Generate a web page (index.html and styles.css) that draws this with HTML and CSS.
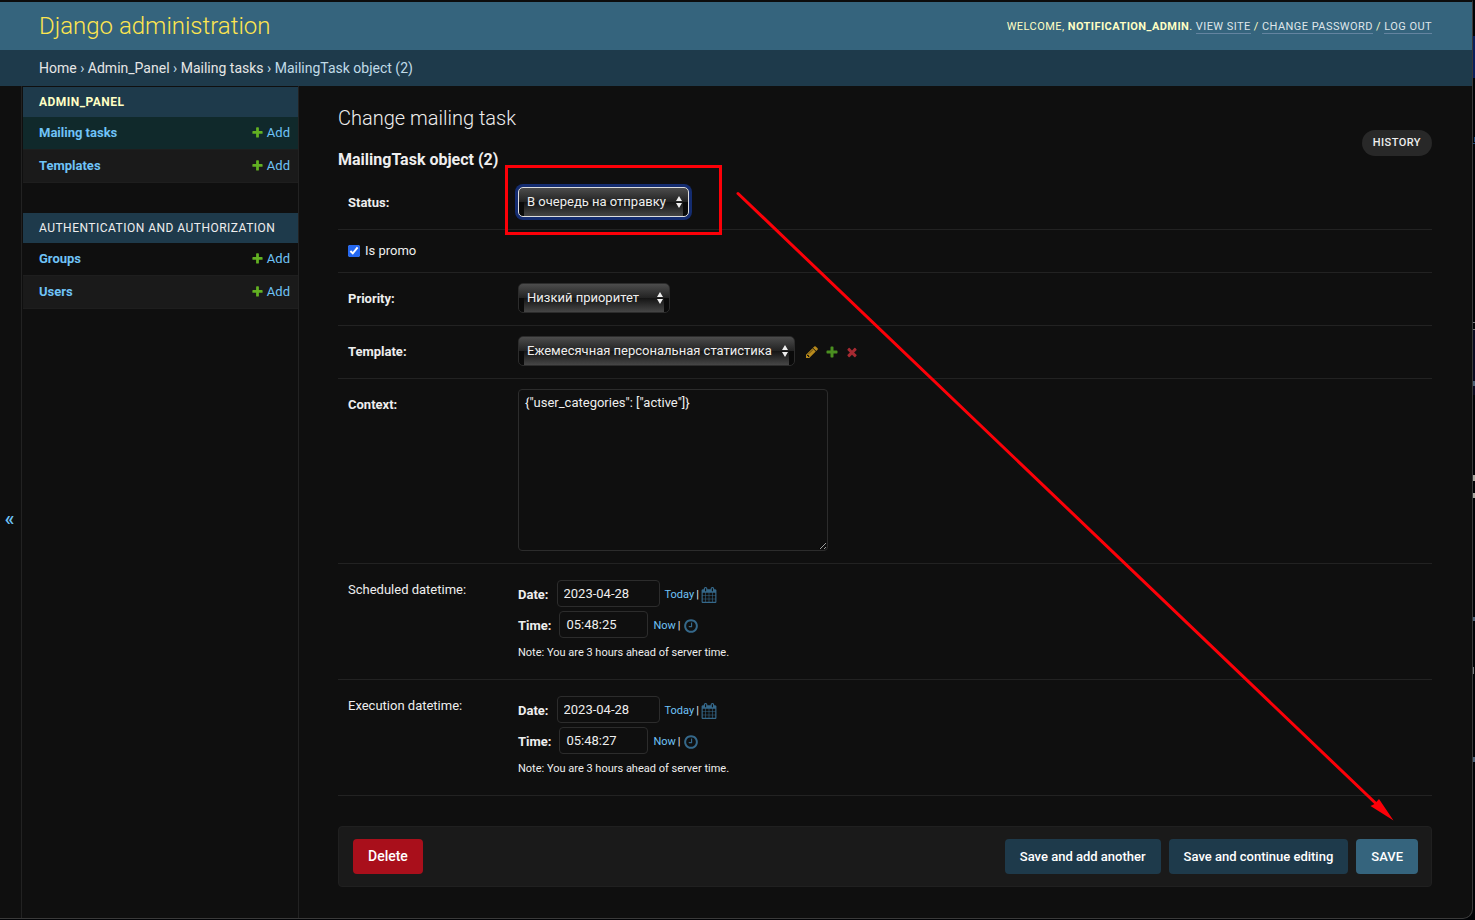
FILE: index.html
```html
<!DOCTYPE html>
<html lang="en">
<head>
<meta charset="utf-8">
<title>MailingTask object (2) | Change mailing task | Django administration</title>
<link rel="stylesheet" href="styles.css">
</head>
<body>
<svg class="symbols" aria-hidden="true">
  <symbol id="plus" viewBox="0 0 1792 1792"><path d="M1600 796v192q0 40-28 68t-68 28h-416v416q0 40-28 68t-68 28h-192q-40 0-68-28t-28-68v-416h-416q-40 0-68-28t-28-68v-192q0-40 28-68t68-28h416v-416q0-40 28-68t68-28h192q40 0 68 28t28 68v416h416q40 0 68 28t28 68z"/></symbol>
  <symbol id="pencil" viewBox="0 0 1792 1792"><path d="M491 1536l91-91-235-235-91 91v107h128v128h107zm523-928q0-22-22-22-10 0-17 7l-542 542q-7 7-7 17 0 22 22 22 10 0 17-7l542-542q7-7 7-17zm-54-192l416 416-832 832h-416v-416zm683 96q0 53-37 90l-166 166-416-416 166-165q36-38 90-38 53 0 91 38l235 234q37 39 37 91z"/></symbol>
  <symbol id="cross" viewBox="0 0 1792 1792"><path d="M1490 1322q0 40-28 68l-136 136q-28 28-68 28t-68-28l-294-294-294 294q-28 28-68 28t-68-28l-136-136q-28-28-28-68t28-68l294-294-294-294q-28-28-28-68t28-68l136-136q28-28 68-28t68 28l294 294 294-294q28-28 68-28t68 28l136 136q28 28 28 68t-28 68l-294 294 294 294q28 28 28 68z"/></symbol>
  <symbol id="calendar" viewBox="0 0 1792 1792"><path d="M192 1664h288v-288h-288v288zm352 0h320v-288h-320v288zm-352-352h288v-320h-288v320zm352 0h320v-320h-320v320zm-352-384h288v-288h-288v288zm736 736h320v-288h-320v288zm-384-736h320v-288h-320v288zm768 736h288v-288h-288v288zm-384-352h320v-320h-320v320zm-352-864v-288q0-13-9.500-22.500t-22.500-9.500h-64q-13 0-22.500 9.500t-9.500 22.500v288q0 13 9.500 22.500t22.500 9.500h64q13 0 22.500-9.500t9.500-22.500zm736 864h288v-320h-288v320zm-384-384h320v-288h-320v288zm384 0h288v-288h-288v288zm32-480v-288q0-13-9.500-22.500t-22.500-9.500h-64q-13 0-22.500 9.500t-9.500 22.500v288q0 13 9.500 22.500t22.500 9.500h64q13 0 22.500-9.500t9.500-22.500zm384-64v1280q0 52-38 90t-90 38h-1408q-52 0-90-38t-38-90v-1280q0-52 38-90t90-38h128v-96q0-66 47-113t113-47h64q66 0 113 47t47 113v96h384v-96q0-66 47-113t113-47h64q66 0 113 47t47 113v96h128q52 0 90 38t38 90z"/></symbol>
  <symbol id="clock" viewBox="0 0 1792 1792"><path d="M1024 544v448q0 14-9 23t-23 9h-320q-14 0-23-9t-9-23v-64q0-14 9-23t23-9h224v-352q0-14 9-23t23-9h64q14 0 23 9t9 23zm416 352q0-148-73-273t-198-198-273-73-273 73-198 198-73 273 73 273 198 198 273 73 273-73 198-198 73-273zm224 0q0 209-103 385.500t-279.500 279.500-385.500 103-385.500-103-279.500-279.500-103-385.500 103-385.500 279.500-279.500 385.500-103 385.500 103 279.500 279.500 103 385.500z"/></symbol>
  <symbol id="updown" viewBox="0 0 6 12"><path d="M3 0l3 5H0zM3 12L0 7h6z"/></symbol>
</svg>

<div class="window">
  <header class="header">
    <h1 class="brand"><a href="#">Django administration</a></h1>
    <div class="user-tools">Welcome, <strong>notification_admin</strong>. <a href="#">View site</a> / <a href="#">Change password</a> / <a href="#">Log out</a></div>
  </header>
  <nav class="breadcrumbs" aria-label="Breadcrumbs"><a href="#">Home</a> › <a href="#">Admin_Panel</a> › <a href="#">Mailing tasks</a> › MailingTask object (2)</nav>

  <div class="main">
    <button class="nav-toggle" type="button" aria-label="Toggle navigation">«</button>
    <nav class="sidebar" aria-label="Applications">
      <table class="module">
        <caption class="current-app"><a href="#">Admin_Panel</a></caption>
        <tr class="current-model"><th scope="row"><a href="#">Mailing tasks</a></th><td><a class="add" href="#"><svg><use href="#plus"/></svg>Add</a></td></tr>
        <tr><th scope="row"><a href="#">Templates</a></th><td><a class="add" href="#"><svg><use href="#plus"/></svg>Add</a></td></tr>
      </table>
      <table class="module">
        <caption><a href="#">Authentication and Authorization</a></caption>
        <tr><th scope="row"><a href="#">Groups</a></th><td><a class="add" href="#"><svg><use href="#plus"/></svg>Add</a></td></tr>
        <tr><th scope="row"><a href="#">Users</a></th><td><a class="add" href="#"><svg><use href="#plus"/></svg>Add</a></td></tr>
      </table>
    </nav>

    <main class="content">
      <div class="title-row">
        <div>
          <h1 class="title">Change mailing task</h1>
          <h2 class="subtitle">MailingTask object (2)</h2>
        </div>
        <a class="history" href="#">History</a>
      </div>

      <form>
        <div class="form-row">
          <label class="name" for="status">Status:</label>
          <span class="select focused"><select id="status"><option>В очередь на отправку</option></select><svg><use href="#updown"/></svg></span>
        </div>
        <div class="form-row check-row">
          <input id="promo" type="checkbox" checked><label for="promo">Is promo</label>
        </div>
        <div class="form-row">
          <label class="name" for="priority">Priority:</label>
          <span class="select"><select id="priority"><option>Низкий приоритет</option></select><svg><use href="#updown"/></svg></span>
        </div>
        <div class="form-row">
          <label class="name" for="template">Template:</label>
          <span class="select"><select id="template"><option>Ежемесячная персональная статистика</option></select><svg><use href="#updown"/></svg></span>
          <span class="related">
            <a class="change" href="#" aria-label="Change template"><svg><use href="#pencil"/></svg></a>
            <a class="plus" href="#" aria-label="Add template"><svg><use href="#plus"/></svg></a>
            <a class="delete" href="#" aria-label="Delete template"><svg><use href="#cross"/></svg></a>
          </span>
        </div>
        <div class="form-row">
          <label class="name" for="context">Context:</label>
          <textarea id="context">{"user_categories": ["active"]}</textarea>
        </div>
        <div class="form-row datetime-row">
          <span class="name optional">Scheduled datetime:</span>
          <div class="datetime">
            <div class="line"><label for="sd">Date:</label><input class="date" id="sd" type="text" value="2023-04-28"><span class="shortcuts"><a href="#">Today</a> | <a class="pick" href="#" aria-label="Choose a date"><svg><use href="#calendar"/></svg></a></span></div>
            <div class="line"><label for="st">Time:</label><input class="time" id="st" type="text" value="05:48:25"><span class="shortcuts"><a href="#">Now</a> | <a class="pick" href="#" aria-label="Choose a time"><svg><use href="#clock"/></svg></a></span></div>
            <p class="note">Note: You are 3 hours ahead of server time.</p>
          </div>
        </div>
        <div class="form-row datetime-row">
          <span class="name optional">Execution datetime:</span>
          <div class="datetime">
            <div class="line"><label for="ed">Date:</label><input class="date" id="ed" type="text" value="2023-04-28"><span class="shortcuts"><a href="#">Today</a> | <a class="pick" href="#" aria-label="Choose a date"><svg><use href="#calendar"/></svg></a></span></div>
            <div class="line"><label for="et">Time:</label><input class="time" id="et" type="text" value="05:48:27"><span class="shortcuts"><a href="#">Now</a> | <a class="pick" href="#" aria-label="Choose a time"><svg><use href="#clock"/></svg></a></span></div>
            <p class="note">Note: You are 3 hours ahead of server time.</p>
          </div>
        </div>
        <div class="submit-row">
          <a class="button delete-button" href="#">Delete</a>
          <button class="button" type="button">Save and add another</button>
          <button class="button" type="button">Save and continue editing</button>
          <button class="button save" type="button">SAVE</button>
        </div>
      </form>
    </main>
  </div>
</div>

<svg class="backdrop-edge" viewBox="0 0 2 920" aria-hidden="true">
  <path fill="#0a1f5c" d="M0 36h2v42H0z"/>
  <path fill="#1d4a78" d="M0 143h2v1H0zM1 137h1v5H1z"/>
  <path fill="#0a0a20" d="M0 330h2v65H0z"/>
  <path fill="#77797c" d="M0 322h2v1H0zM0 329h2v1H0zM0 667h1v7H0z"/>
  <path fill="#4d6378" d="M0 381h2v5H0zM0 617h2v4H0zM0 757h2v5H0z"/>
  <path fill="#a8a8a0" d="M0 475h2v6H0zM0 493h2v5H0z"/>
</svg>
<svg class="annotation" width="1475" height="920" aria-hidden="true">
  <rect x="506.500" y="166.500" width="214" height="67" fill="none" stroke="#fc0008" stroke-width="3"/>
  <path d="M738 193.500L1378 805.500" fill="none" stroke="#fc0008" stroke-width="3" stroke-linecap="round"/>
  <path d="M1393.500 820.500l-23-14.500 4-2 4.500-5z" fill="#fc0008"/>
</svg>
</body>
</html>
```
FILE: styles.css
```css
* { box-sizing: border-box; }

body {
  margin: 0;
  position: relative;
  background: #010306;
  color: #eee;
  font: 13px/20px Roboto, sans-serif;
}

a { color: #6fc3f7; text-decoration: none; }
svg { display: block; fill: currentColor; }
.symbols { display: none; }
input, select, textarea, button { font: inherit; color: inherit; margin: 0; }

.window {
  display: flex;
  flex-direction: column;
  min-height: calc(100vh - 1px);
  margin-right: 2px;
  border-top: 2px solid #0c0c0c;
  border-right: 1px solid #3a3a3a;
  border-bottom: 1px solid #3a3a3a;
  border-bottom-right-radius: 10px;
  background: #0f0f0f;
}

.header {
  display: flex;
  align-items: center;
  justify-content: space-between;
  height: 48px;
  padding: 0 40px 0 39px;
  background: #35647d;
  color: #ffffc4;
}
.brand { margin: 0; font-size: 24px; font-weight: 300; line-height: 28px; }
.brand a { color: #ffe64f; }
.user-tools { padding-top: 2px; font-size: 11px; text-transform: uppercase; letter-spacing: 0.04em; }
.user-tools strong { font-weight: 700; }
.user-tools a { color: #dfe6ea; border-bottom: 1px solid #6484a0; }

.breadcrumbs {
  padding: 8px 39px;
  background: #1e3a4b;
  color: #c0dbe8;
  font-size: 14px;
}
.breadcrumbs a { color: #e6e6e6; }

.main { display: flex; flex: 1; }
.nav-toggle {
  width: 22px;
  padding: 32px 2px 0 0;
  border: 0;
  border-right: 1px solid #222;
  background: none;
  color: #6fc3f7;
  font-size: 20px;
  font-weight: 500;
}
.sidebar {
  width: 277px;
  flex: none;
  padding: 1px 0 0 1px;
  border-right: 1px solid #222;
}
.module { width: 100%; margin-bottom: 30px; border-collapse: collapse; }
.module caption {
  padding: 5px 16px;
  background: #1e3a4b;
  text-align: left;
  text-transform: uppercase;
  font-size: 12px;
  letter-spacing: 0.04em;
}
.module caption a { color: #eee; }
.module .current-app { font-weight: 700; }
.module .current-app a { color: #ffffc4; }
.module th, .module td { padding: 6px 8px 6px 16px; border-bottom: 1px solid #1e1e1e; text-align: left; }
.module tr:nth-child(even) { background: #1a1a1a; }
.module .current-model { background: #10292b; }
.module td { width: 80px; }
.add { display: flex; align-items: center; justify-content: flex-end; gap: 3px; }
.add svg { width: 13px; height: 13px; margin-bottom: 2px; color: #62b022; }

.content { flex: 1; min-width: 0; padding: 20px 40px 31px 39px; }
.title-row { display: flex; justify-content: space-between; align-items: flex-start; }
.title { margin: 0 0 20px; font-size: 20px; font-weight: 300; line-height: 24px; color: #eee; }
.subtitle { margin: 0 0 7px; font-size: 16px; line-height: 20px; }
.history {
  margin-top: 24px;
  padding: 3px 11px;
  border-radius: 15px;
  background: #282828;
  color: #eee;
  font-size: 11px;
  font-weight: 500;
  text-transform: uppercase;
  letter-spacing: 0.04em;
}

.form-row {
  display: flex;
  align-items: flex-start;
  padding: 10px 10px 12px;
  border-bottom: 1px solid #222;
}
.name { width: 170px; padding-top: 6px; font-weight: 700; }
.optional { font-weight: 400; }

.check-row { align-items: center; gap: 5px; padding: 11px 10px; }
.check-row input { width: 12px; height: 12px; accent-color: #2568f0; }

.select { position: relative; display: block; }
.select select {
  display: block;
  appearance: none;
  height: 30px;
  padding: 0 22px 0 8px;
  border: 1px solid #2c2c2c;
  border-radius: 5px;
  outline: 0;
  background:
    linear-gradient(#141414, #464646) center bottom / calc(100% - 10px) 14px no-repeat,
    linear-gradient(#4c4c4c, #222) top / 100% 14px no-repeat,
    #0a0a0a;
}
.select #priority { min-width: 152px; }
.select svg { position: absolute; right: 7px; top: 9px; width: 6px; height: 12px; }
.focused select { border-color: #ddd; box-shadow: 0 0 0 3px #142c70; }

.related { display: flex; align-items: center; gap: 6px; padding: 9px 0 0 10px; }
.related svg { width: 14px; height: 14px; }
.change { color: #b88a1c; }
.plus { color: #4a8f20; }
.delete { color: #a62a32; }

textarea {
  display: block;
  width: 310px;
  height: 162px;
  padding: 3px 6px;
  border: 1px solid #2c2c2c;
  border-radius: 4px;
  background: #0f0f0f;
}

.datetime-row { padding: 16px; padding-left: 10px; }
.datetime-row .name { padding-top: 0; }
.datetime { display: grid; gap: 4px; }
.line { display: flex; align-items: center; }
.line label { margin-right: 8px; padding-top: 2px; font-weight: 700; }
.line input {
  height: 27px;
  padding: 0 6px;
  border: 1px solid #2c2c2c;
  border-radius: 4px;
  background: #0f0f0f;
}
.line .date { width: 103px; }
.line .time { width: 89px; }
.shortcuts { display: flex; align-items: center; gap: 2px; padding: 3px 0 0 5px; font-size: 11px; }
.pick { color: #35688a; }
.pick svg { width: 16px; height: 16px; }
.note { margin: 0; padding-top: 1px; font-size: 11px; }

.submit-row {
  display: flex;
  gap: 8px;
  margin-top: 30px;
  padding: 12px 13px 12px 14px;
  border: 1px solid #202020;
  border-radius: 4px;
  background: #1a1a1a;
}
.button {
  height: 35px;
  padding: 0 15px;
  border: 0;
  border-radius: 4px;
  background: #1e3a4b;
  color: #fff;
  font-size: 13px;
  font-weight: 500;
  line-height: 35px;
}
.delete-button { margin-right: auto; background: #a90f1b; font-size: 14px; }
.save { background: #35647d; }

.backdrop-edge { position: absolute; top: 0; right: 0; width: 2px; height: 920px; }
.annotation { position: absolute; top: 0; left: 0; pointer-events: none; }
```
